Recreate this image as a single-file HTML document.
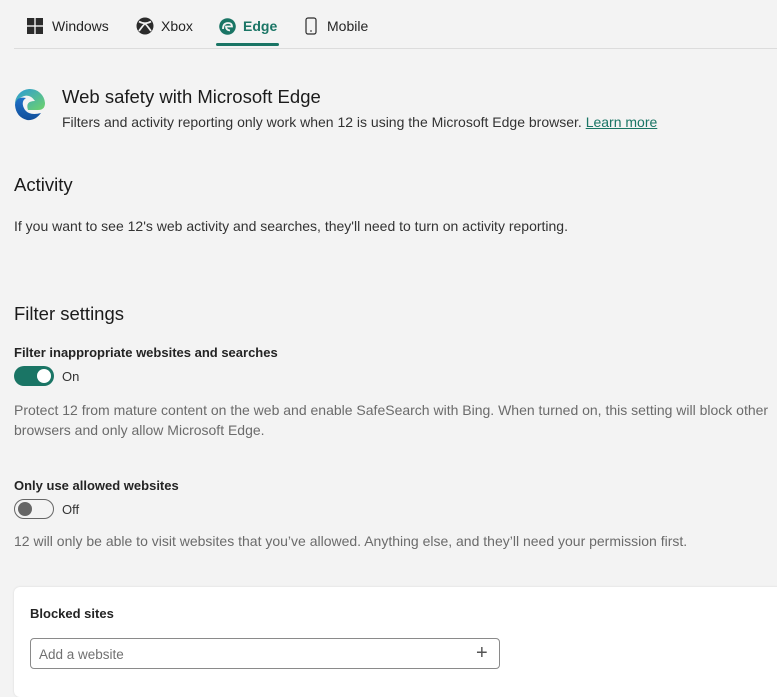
<!DOCTYPE html>
<html><head><style>
*{margin:0;padding:0;box-sizing:border-box}
body{width:777px;height:679px;background:#f3f3f3;font-family:"Liberation Sans",sans-serif;color:#1b1b1b;position:relative;overflow:hidden}
.a{position:absolute;white-space:nowrap}
.tab{font-size:14px;color:#242424;top:18px}
.gray{color:#6b6b6b;font-size:14px}
</style></head><body>
<svg class="a" style="left:27px;top:18px" width="16" height="16"><rect x="0" y="0" width="7.3" height="7.3" fill="#2b2b2b"/><rect x="8.7" y="0" width="7.3" height="7.3" fill="#2b2b2b"/><rect x="0" y="8.7" width="7.3" height="7.3" fill="#2b2b2b"/><rect x="8.7" y="8.7" width="7.3" height="7.3" fill="#2b2b2b"/></svg>
<div class="a tab" style="left:52px">Windows</div>
<svg class="a" style="left:136px;top:17px" width="18" height="18" viewBox="0 0 18 18"><circle cx="9" cy="9" r="8.5" fill="#2b2b2b"/><path d="M3 4.5Q9 8 15 4.5M3 14Q8 7 9 7Q10 7 15 14" stroke="#f3f3f3" stroke-width="1.8" fill="none"/></svg>
<div class="a tab" style="left:161px">Xbox</div>
<svg class="a" style="left:219px;top:18px" width="17" height="17" viewBox="0 0 17 17"><circle cx="8.5" cy="8.5" r="8.3" fill="#1a7565"/><path d="M4 11Q4 5 9 5Q13 5 13 8.5L7 8.5Q7 12 11 12.5" stroke="#f3f3f3" stroke-width="1.8" fill="none"/></svg>
<div class="a tab" style="left:243px;color:#1a7565;font-weight:bold">Edge</div>
<div class="a" style="left:216px;top:43px;width:63px;height:3px;background:#1a7565;border-radius:2px"></div>
<svg class="a" style="left:305px;top:17px" width="12" height="18"><rect x="1" y="1" width="10" height="16" rx="2" fill="none" stroke="#2b2b2b" stroke-width="1.2"/><line x1="5" y1="14" x2="7" y2="14" stroke="#2b2b2b"/></svg>
<div class="a tab" style="left:327px">Mobile</div>
<div class="a" style="left:14px;top:48px;width:763px;height:1px;background:#dcdcdc"></div>
<svg class="a" style="left:13px;top:88px" width="34" height="34" viewBox="0 0 34 34"><defs><linearGradient id="g1" x1="0" y1="0" x2="1" y2="1"><stop offset="0" stop-color="#2b9ad8"/><stop offset="1" stop-color="#6fd36a"/></linearGradient><linearGradient id="g2" x1="0" y1="0" x2="0" y2="1"><stop offset="0" stop-color="#1f72c9"/><stop offset="1" stop-color="#114e9a"/></linearGradient></defs><path d="M2 17A15 15 0 0 1 32 15Q32 22 25 22L15 22Q12 13 22 13Q16 4 7 10Q2 13 2 17Z" fill="url(#g1)"/><path d="M2 17Q3 8 13 10Q7 14 12 22Q17 28 28 25Q22 33 14 32Q3 29 2 17Z" fill="url(#g2)"/></svg>
<div class="a" style="left:62px;top:86px;font-size:18.5px">Web safety with Microsoft Edge</div>
<div class="a" style="left:62px;top:114px;font-size:14px;color:#333">Filters and activity reporting only work when 12 is using the Microsoft Edge browser. <span style="color:#1a7565;text-decoration:underline">Learn more</span></div>
<div class="a" style="left:14px;top:174px;font-size:18.5px">Activity</div>
<div class="a" style="left:14px;top:218px;font-size:14px;color:#333">If you want to see 12's web activity and searches, they'll need to turn on activity reporting.</div>
<div class="a" style="left:14px;top:303px;font-size:18.5px">Filter settings</div>
<div class="a" style="left:14px;top:345px;font-size:13px;font-weight:bold;color:#242424">Filter inappropriate websites and searches</div>
<div class="a" style="left:14px;top:366px;width:40px;height:20px;border-radius:10px;background:#1a7565"></div>
<div class="a" style="left:37px;top:369px;width:14px;height:14px;border-radius:7px;background:#fff"></div>
<div class="a" style="left:62px;top:369px;font-size:13px;color:#333">On</div>
<div class="a gray" style="left:14px;top:400px;line-height:20px">Protect 12 from mature content on the web and enable SafeSearch with Bing. When turned on, this setting will block other<br>browsers and only allow Microsoft Edge.</div>
<div class="a" style="left:14px;top:478px;font-size:13px;font-weight:bold;color:#242424">Only use allowed websites</div>
<div class="a" style="left:14px;top:499px;width:40px;height:20px;border-radius:10px;border:1px solid #666"></div>
<div class="a" style="left:18px;top:502px;width:14px;height:14px;border-radius:7px;background:#666"></div>
<div class="a" style="left:62px;top:502px;font-size:13px;color:#333">Off</div>
<div class="a gray" style="left:14px;top:533px">12 will only be able to visit websites that you’ve allowed. Anything else, and they’ll need your permission first.</div>
<div class="a" style="left:14px;top:587px;width:780px;height:110px;background:#fff;border-radius:6px;box-shadow:0 0 2px rgba(0,0,0,.12)"></div>
<div class="a" style="left:30px;top:606px;font-size:13px;font-weight:bold;color:#242424">Blocked sites</div>
<div class="a" style="left:30px;top:638px;width:470px;height:31px;border:1px solid #8a8a8a;border-radius:4px;background:#fff"></div>
<div class="a" style="left:39px;top:647px;font-size:13.5px;color:#707070">Add a website</div>
<div class="a" style="left:476px;top:642px;font-size:20px;font-weight:300;color:#555">+</div>
</body></html>
